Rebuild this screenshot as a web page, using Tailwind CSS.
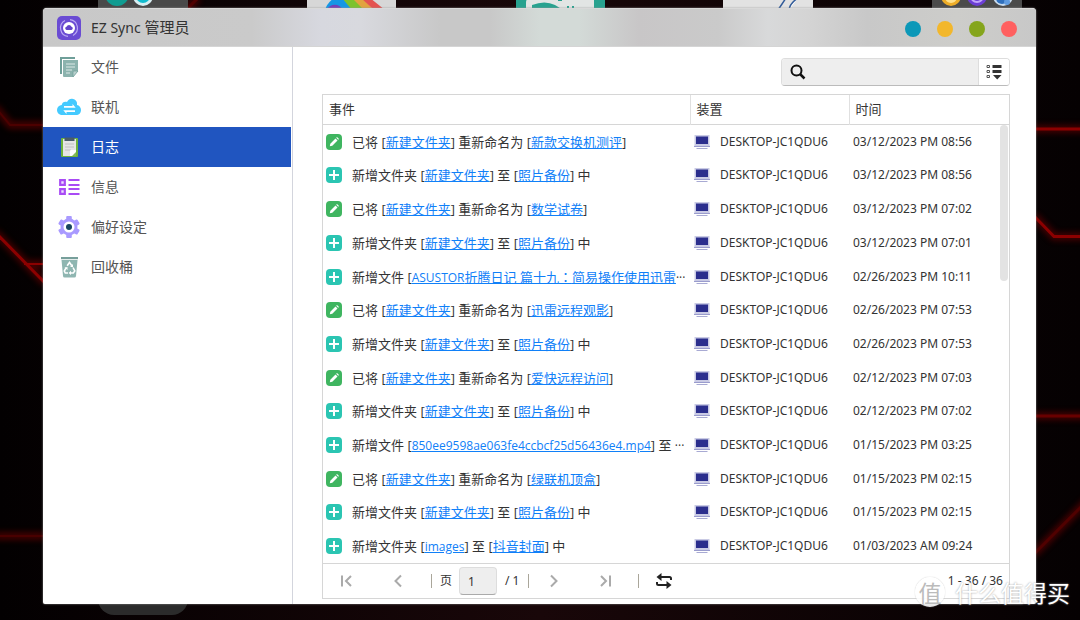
<!DOCTYPE html>
<html lang="zh-CN">
<head>
<meta charset="utf-8">
<meta name="viewport" content="width=device-width, initial-scale=1">
<title>EZ Sync 管理员</title>
<script src="https://cdn.jsdelivr.net/npm/@tailwindcss/browser@4"></script>
</head>
<body class="relative h-screen overflow-hidden bg-[#050102] font-['Noto_Sans','Noto_Sans_CJK_SC',sans-serif] text-[#333]">

<!-- Desktop wallpaper and the icons behind the window -->
<svg class="absolute inset-0 h-full w-full" viewBox="0 0 1080 620" preserveAspectRatio="none" aria-hidden="true">
  <defs>
    <filter id="glow" x="-20%" y="-20%" width="140%" height="140%" filterUnits="userSpaceOnUse"><feGaussianBlur stdDeviation="3"/></filter>
    <linearGradient id="base" x1="0" x2="1"><stop offset="0" stop-color="#030001"/><stop offset=".5" stop-color="#190709"/><stop offset="1" stop-color="#050102"/></linearGradient>
  </defs>
  <rect width="1080" height="620" fill="url(#base)"/>
  <g fill="none" stroke="#900000" stroke-width="7" filter="url(#glow)" opacity=".5">
    <path d="M-5 107L10 125H45M-5 232L45 283M24 264H45M-5 536H45M1030 129H1090M1034 216L1054 236.500H1090M1034 416H1090M1034 554L1090 498M186 10L198 -2"/>
  </g>
  <g fill="none" stroke="#8c0000" stroke-width="3">
    <path d="M-5 107L10 125H45" stroke="#4c0000" stroke-width="2"/>
    <path d="M-5 232L45 283"/><path d="M24 264H45" stroke-width="2"/>
    <path d="M-5 536H45" stroke="#480000" stroke-width="2"/>
    <path d="M1030 129H1090M1034 216L1054 236.500H1090"/>
    <path d="M1034 416H1090" stroke="#680000"/>
    <path d="M1034 554L1090 498M186 10L198 -2" stroke="#500000"/>
  </g>
  <rect x="98" y="-20" width="90" height="30" fill="#494949"/>
  <circle cx="117" cy="-6" r="12" fill="#109c91"/>
  <circle cx="143" cy="-4" r="10" fill="#d8eef2"/><circle cx="143" cy="-4" r="7" fill="#12bccf"/>
  <rect x="307" y="-20" width="89" height="30" fill="#d7d7d7"/>
  <path d="M334-2H345L358 10H325Q327 3 334-2Z" fill="#1597e5"/><path d="M326 10C331 3 339 3 343 10Z" fill="#7340b9"/>
  <path d="M342-2H354L366 10H352Z" fill="#7cc32c"/><path d="M352-2H362L374 10H364Z" fill="#e2a33f"/><path d="M361-2H370L385 10H374Z" fill="#e45350"/>
  <rect x="516" y="-20" width="89" height="30" fill="#28a28f"/><path d="M526 10V3Q526-2 530-2H594V10Z" fill="#e2e5e4"/><path d="M532 10V5Q545 0 555 5L563 10Z" fill="#28a28f"/><path d="M567 7h2M572 7h2M558 0h4" stroke="#28a28f" stroke-width="2"/>
  <rect x="723" y="-20" width="90" height="30" fill="#e2e2e2"/><path d="M778 10L786-2M789 10Q790 3 798-2" stroke="#315b99" stroke-width="1.500" fill="#fff"/>
  <rect x="932" y="-20" width="90" height="30" fill="#4b4b4b"/>
  <circle cx="951" cy="-4" r="10" fill="#eead28"/><circle cx="951" cy="-3" r="6" fill="#ffe08b"/>
  <circle cx="977" cy="-4" r="10" fill="#6c3ed6"/><circle cx="977" cy="-4" r="6" fill="none" stroke="#c0a6fa" stroke-width="2"/>
  <circle cx="1003" cy="-4" r="10" fill="#c8dbee"/><circle cx="1002" cy="-2" r="6" fill="#2f70be"/><circle cx="1007" cy="2" r="3" fill="#5f9be0"/>
  <rect x="98" y="580" width="90" height="35" rx="16" fill="#2b2b2b"/>
</svg>

<!-- Shared icons -->
<svg class="hidden">
  <symbol id="edit" viewBox="0 0 16 16"><rect width="16" height="16" rx="4" fill="#3fb560"/><path d="M3.800 12.300L4.300 9.700L9.500 4.500L11.500 6.500L6.300 11.800ZM10.200 3.800L11 3L13 5L12.200 5.800Z" fill="#fff"/></symbol>
  <symbol id="add" viewBox="0 0 16 16"><rect width="16" height="16" rx="4" fill="#2bc5b2"/><path d="M8 3v10M3 8h10" stroke="#fff" stroke-width="2"/></symbol>
  <symbol id="pc" viewBox="0 0 16 14"><path d="M.5 0h15v9.500l.5 2.500H0l.5-2.500Z" fill="#c9cae4"/><path d="M0 11.500h16" stroke="#9a9ccd"/><rect x="2" y="1.500" width="12" height="7.500" fill="#2b2e8d"/><path d="M2.500 13.500h11" stroke="#a8aad3"/></symbol>
</svg>

<div class="relative flex h-full flex-col pt-2 pr-11 pb-4 pl-[43px]">
<div class="flex min-h-0 flex-1 flex-col overflow-hidden rounded-t-sm rounded-b-xs bg-white shadow-[0_0_2px_#999]">

  <header class="flex h-[39px] shrink-0 items-center border-t border-b border-t-[#d9d9d9] border-b-[#d5d5d5] bg-[linear-gradient(90deg,#c8c8c8_0%,#cacaca_21%,#d7d8df_28%,#d8d9de_32%,#c8c8c8_40%,#c8c8c8_45%,#d3dad7_50%,#d3dad7_54%,#c8c6c7_60%,#cacaca_68%,#d8d9da_73%,#d4d4d4_77%,#c8c8c8_83%,#cdcdca_92%,#c8c8c8_100%)] pr-[19px] pl-3.5">
    <svg class="h-6 w-6" viewBox="0 0 24 24" aria-hidden="true"><rect width="24" height="24" rx="5" fill="#6a4bd3"/><circle cx="12" cy="12" r="6" fill="#fff"/><path d="M9.500 14a1.700 1.700 0 0 1 0-3.300a2.700 2.700 0 0 1 5 0a1.700 1.700 0 0 1 0 3.300Z" fill="#6243c9"/><path d="M13 3.600A8.500 8.500 0 0 1 16 19.500M11 20.400A8.500 8.500 0 0 1 8 4.500" fill="none" stroke="#b9a8f2" stroke-width="1.200"/></svg>
    <h1 class="ml-2.5 text-[15px]"><span class="text-sm">EZ Sync</span> 管理员</h1>
    <div class="ml-auto flex gap-4 pt-0.5">
      <button type="button" aria-label="说明" class="h-4 w-4 rounded-full bg-[#0c98b8]"></button>
      <button type="button" aria-label="最小化" class="h-4 w-4 rounded-full bg-[#f2b72c]"></button>
      <button type="button" aria-label="最大化" class="h-4 w-4 rounded-full bg-[#85a51c]"></button>
      <button type="button" aria-label="关闭" class="h-4 w-4 rounded-full bg-[#ff6060]"></button>
    </div>
  </header>

  <div class="flex min-h-0 flex-1">
    <nav class="w-[250px] shrink-0 border-r border-[#d3d5dd] pr-px text-sm text-[#555]">
      <a href="#files" class="flex h-10 items-center gap-2.5 pl-3.5">
        <svg class="h-6 w-6" viewBox="0 0 24 24" aria-hidden="true"><path d="M4 19V3h14" fill="none" stroke="#6f9f99" stroke-width="2"/><path d="M6 5h15v11l-5 6H7q-1 0-1-1Z" fill="#8cb3ae"/><path d="M9 9h9M9 12h9M9 15h6M9 18h4" stroke="#dce9e7"/><path d="M21 16l-5 6v-5q0-1 1-1Z" fill="#b9d0cd" stroke="#6f9f99" stroke-width=".7"/></svg>文件</a>
      <a href="#connections" class="flex h-10 items-center gap-2.5 pl-3.5">
        <svg class="h-6 w-6" viewBox="0 0 24 24" aria-hidden="true"><path d="M5.500 20C2.500 20 0 18 0 15s2.200-4.800 4.700-5C5 7 8 6 10 7C11.500 4 14 3.500 16 4c3 .6 4.600 3.200 4 6c2.300.5 4 2.300 4 5c0 3-2 5-5 5Z" fill="#44caff"/><path d="M7 11h8.500V9l3.200 3.700H7ZM18 17H9.500v2L6.300 15.300H18Z" fill="#fff"/></svg>联机</a>
      <a href="#log" aria-current="page" class="flex h-10 items-center gap-2.5 bg-[#2055c0] pl-3.5 text-white">
        <svg class="h-6 w-6" viewBox="0 0 24 24" aria-hidden="true"><rect x="4" y="3" width="17" height="19" rx="1" fill="#6eb43b"/><path d="M6 4h13v12l-5 5H6Z" fill="#e5e5e5"/><path d="M7.500 2.500h10v3.500h-10Z" fill="#4b5d68"/><path d="M8 9h9M8 12h9M8 15h6" stroke="#c1c1c1"/><path d="M19 15v6h-6V16q0-1 1-1Z" fill="#fff"/><path d="M19 17v4h-4Z" fill="#83b95e"/></svg>日志</a>
      <a href="#info" class="flex h-10 items-center gap-2.5 pl-3.5">
        <svg class="h-6 w-6" viewBox="0 0 24 24" aria-hidden="true"><path d="M3.200 5.200h4.600v4.600H3.200ZM3.200 14.200h4.600v4.600H3.200Z" fill="#eedcff" stroke="#a94bf5" stroke-width="2.200"/><path d="M11.500 5h11M11.500 10h11M11.500 14h11M11.500 19h11" stroke="#a94bf5" stroke-width="2"/></svg>信息</a>
      <a href="#preferences" class="flex h-10 items-center gap-2.5 pl-3.5">
        <svg class="h-6 w-6" viewBox="0 0 24 24" aria-hidden="true"><g fill="#a99aff"><circle cx="12" cy="12" r="8.500"/><rect x="9.200" y="1" width="5.600" height="22" rx="1"/><rect x="9.200" y="1" width="5.600" height="22" rx="1" transform="rotate(60 12 12)"/><rect x="9.200" y="1" width="5.600" height="22" rx="1" transform="rotate(120 12 12)"/></g><circle cx="12" cy="12" r="5.500" fill="#fff"/><circle cx="12" cy="12" r="3" fill="#17445f"/></svg>偏好设定</a>
      <a href="#recycle" class="flex h-10 items-center gap-2.5 pl-3.5">
        <svg class="h-6 w-6" viewBox="0 0 24 24" aria-hidden="true"><path d="M4 2h17v2.200H4Z" fill="#779f9b"/><path d="M4.500 5h16L19 21q-.2 1.500-1.500 1.500h-10Q6.200 22.500 6 21Z" fill="#8fb6b1"/><path d="M10.200 10.800L12.500 7.500L14.800 10.800M16 12.500l1.800 3.500l-1.500 2H13.500M11 18H8.300L7.300 16L9 12.800" fill="none" stroke="#fff" stroke-width="1.600"/><path d="M16 9v3h-3ZM14 15.800v4.200l-2.400-2.100ZM7.500 12.500l3-.5v3Z" fill="#fff"/></svg>回收桶</a>
    </nav>

    <main class="flex min-w-0 flex-1 flex-col pt-[11px] pr-[26px] pb-[5px] pl-[29px] text-xs">
      <form class="ml-auto flex h-7 w-[229px] shrink-0 overflow-hidden rounded-sm border border-[#ddd] border-b-[#bbb]">
        <label class="flex min-w-0 flex-1 items-center border-r border-[#ddd] bg-[#eee] pl-2">
          <svg class="h-4 w-4 shrink-0" viewBox="0 0 16 16" fill="none" stroke="#111" stroke-width="2" aria-hidden="true"><circle cx="6.500" cy="6.500" r="5"/><path d="M10 10l4.500 4.500" stroke-width="2.500"/></svg>
          <input type="search" aria-label="搜索" class="min-w-0 flex-1 bg-transparent px-2 outline-none">
        </label>
        <button type="button" aria-label="筛选" class="flex w-[30px] items-center justify-center bg-white">
          <svg class="h-4 w-4" viewBox="0 0 16 16" aria-hidden="true"><path d="M1 1.500h2.500v2H1ZM1 6.500h2.500v2H1ZM1 11.500h2.500v2H1Z" fill="none" stroke="#555"/><path d="M6.500 1h9v3h-9ZM6.500 6h9v3h-9ZM7 11h8.500L11.200 15.500Z" fill="#333"/></svg>
        </button>
      </form>

      <section class="mt-2 flex min-h-0 flex-1 flex-col border border-[#d6d6d6]">
        <div class="relative min-h-0 flex-1">
          <table class="h-full w-full table-fixed border-collapse text-left">
            <colgroup><col><col class="w-[159px]"><col class="w-[160px]"></colgroup>
            <thead><tr class="h-[29px] border-b border-[#d6d6d6] text-[13px]">
              <th class="border-r border-[#e0e0e0] px-1.5 font-normal">事件</th>
              <th class="border-r border-[#e0e0e0] px-1.5 font-normal">装置</th>
              <th class="px-1.5 font-normal">时间</th>
            </tr></thead>
            <tbody id="log"></tbody>
          </table>
          <div class="absolute top-[30px] right-px h-[156px] w-2 rounded-full bg-[#e3e3e3]"></div>
        </div>

        <footer class="flex h-[35px] shrink-0 items-center border-t border-[#d6d6d6] pr-1.5 pl-4">
          <button type="button" aria-label="第一页"><svg class="h-4 w-4" viewBox="0 0 16 16" fill="none" stroke="#aaa" stroke-width="2"><path d="M3 2.500v11M12 3L7 8l5 5"/></svg></button>
          <button type="button" aria-label="上一页" class="ml-9"><svg class="h-4 w-4" viewBox="0 0 16 16" fill="none" stroke="#aaa" stroke-width="2"><path d="M10 2.500L4.500 8l5.500 5.500"/></svg></button>
          <span class="ml-6 h-3.5 w-px bg-[#aaa69a]"></span>
          <label for="page" class="ml-2">页</label>
          <input id="page" type="text" value="1" class="ml-[7px] h-7 w-[38px] rounded-sm border border-[#ddd] border-b-[#aaa] bg-[#eee] px-2">
          <span class="ml-2 w-4 whitespace-nowrap">/ 1</span>
          <span class="ml-[7px] h-3.5 w-px bg-[#aaa69a]"></span>
          <button type="button" aria-label="下一页" class="ml-[17px]"><svg class="h-4 w-4" viewBox="0 0 16 16" fill="none" stroke="#aaa" stroke-width="2"><path d="M5 2.500L10.500 8L5 13.500"/></svg></button>
          <button type="button" aria-label="最后一页" class="ml-9"><svg class="h-4 w-4" viewBox="0 0 16 16" fill="none" stroke="#aaa" stroke-width="2"><path d="M3 3l5 5l-5 5M12 2.500v11"/></svg></button>
          <span class="ml-6 h-3.5 w-px bg-[#aaa69a]"></span>
          <button type="button" aria-label="刷新" class="ml-[17px]"><svg class="h-4 w-4" viewBox="0 0 16 16" fill="none" stroke="#222" stroke-width="2"><path d="M15 7V5.500Q15 4 13.500 4H4M1 9v1.500Q1 12 2.500 12H12"/><path d="M5.500 0v8L.5 4ZM10.500 8v8l5-4Z" fill="#222" stroke="none"/></svg></button>
          <span class="ml-auto">1 - 36 / 36</span>
        </footer>
      </section>
    </main>
  </div>
</div>
</div>

<!-- Corner mark -->
<div class="absolute right-2.5 bottom-3 flex items-center gap-2.5 font-['Noto_Sans_CJK_SC',sans-serif] text-[23px] leading-8 text-white [text-shadow:0_0_2px_#999]">
  <span class="flex h-[30px] w-[30px] items-center justify-center rounded-full bg-white/90 text-[#bbb] shadow-[0_0_1px_#aaa] [text-shadow:none]">值</span>
  <span>什么值得买</span>
</div>

<script>
const folder = '新建文件夹', backup = '照片备份';
const link = text => `<a href="#" class="text-[#1080f8] underline">${text}</a>`;
const latin = text => `<span class="text-xs">${text}</span>`;
const rename = to => ['#edit', `已将 [${link(folder)}] 重新命名为 [${link(to)}]`];
const addFolder = (name, to) => ['#add', `新增文件夹 [${link(name)}] 至 [${link(to)}] 中`];
const rows = [
  [rename('新款交换机测评'), '03/12/2023 PM 08:56'],
  [addFolder(folder, backup), '03/12/2023 PM 08:56'],
  [rename('数学试卷'), '03/12/2023 PM 07:02'],
  [addFolder(folder, backup), '03/12/2023 PM 07:01'],
  [['#add', `新增文件 [${link(latin('ASUSTOR') + '折腾日记 篇十九<span lang="zh-TW" class="font-[\'Noto_Sans_CJK_TC\',sans-serif]">：</span>简易操作使用迅雷')}${latin('···')}`], '02/26/2023 PM 10:11'],
  [rename('迅雷远程观影'), '02/26/2023 PM 07:53'],
  [addFolder(folder, backup), '02/26/2023 PM 07:53'],
  [rename('爱快远程访问'), '02/12/2023 PM 07:03'],
  [addFolder(folder, backup), '02/12/2023 PM 07:02'],
  [['#add', `新增文件 [${link(latin('850ee9598ae063fe4ccbcf25d56436e4.mp4'))}] 至 ${latin('···')}`], '01/15/2023 PM 03:25'],
  [rename('绿联机顶盒'), '01/15/2023 PM 02:15'],
  [addFolder(folder, backup), '01/15/2023 PM 02:15'],
  [addFolder(latin('images'), '抖音封面'), '01/03/2023 AM 09:24'],
];
document.getElementById('log').innerHTML = rows.map(([[icon, text], time]) => `
  <tr>
    <td class="p-0 pl-[3px]"><div class="flex items-center gap-2.5"><svg class="h-4 w-4 shrink-0" aria-hidden="true"><use href="${icon}"/></svg><div class="min-w-0 truncate font-['Open_Sans','Noto_Sans_CJK_SC',sans-serif] text-[13px] leading-5">${text}</div></div></td>
    <td class="p-0 pl-1"><div class="flex items-center gap-2.5"><svg class="h-3.5 w-4 shrink-0" aria-hidden="true"><use href="#pc"/></svg>DESKTOP-JC1QDU6</div></td>
    <td class="p-0 pl-1 whitespace-nowrap">${time}</td>
  </tr>`).join('');
</script>
</body>
</html>
